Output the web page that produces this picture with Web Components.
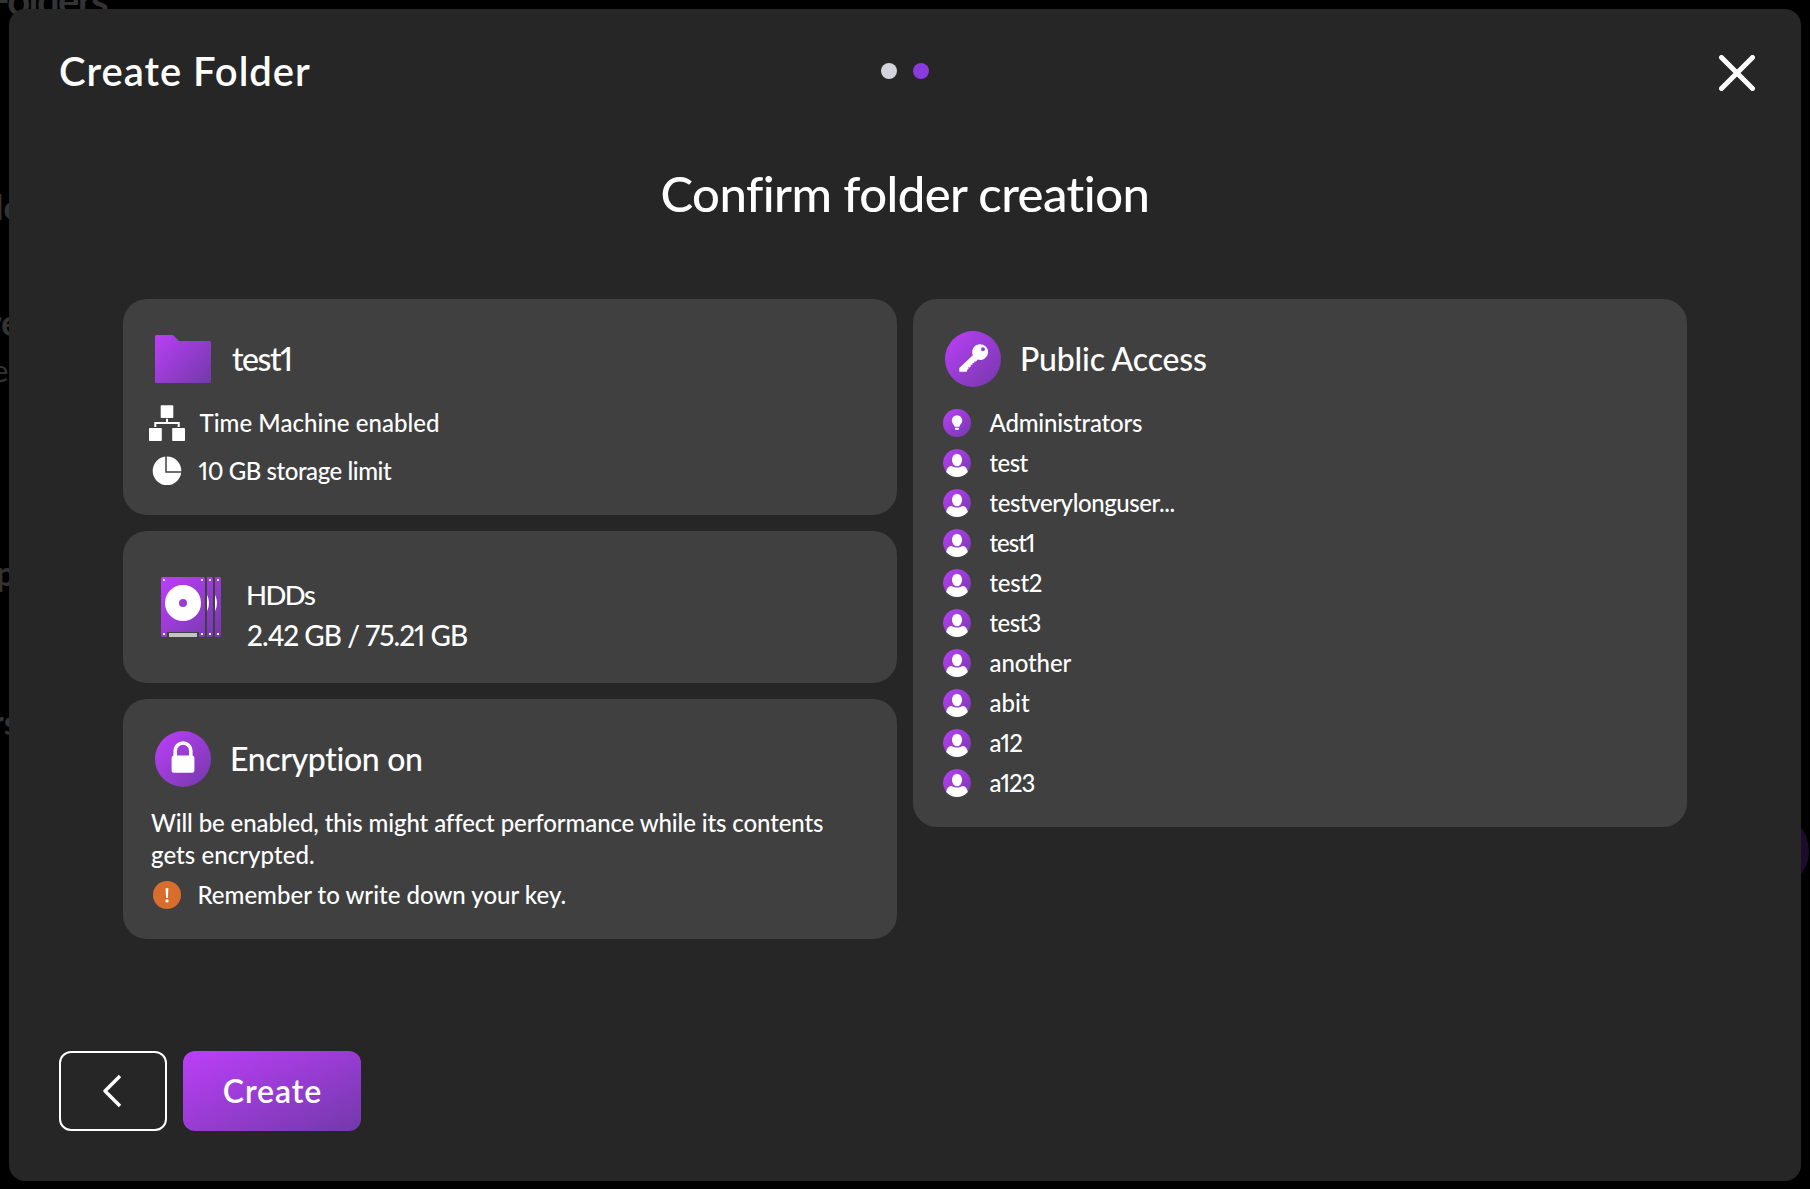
<!DOCTYPE html>
<html lang="en">
<head>
<meta charset="utf-8">
<title>Create Folder</title>
<style>
html, body { margin: 0; height: 100%; background: #000; overflow: hidden; }
body { font-family: Lato, "Open Sans", sans-serif; color: #fff; }
</style>
</head>
<body>
<create-folder-page></create-folder-page>
<script>
const gradient = (id, w, h) => `<defs><linearGradient id="${id}" gradientUnits="userSpaceOnUse" x1="0" y1="0" x2="${w}" y2="${h}"><stop stop-color="#bc3ff9"/><stop offset="1" stop-color="#7339aa"/></linearGradient></defs>`;

const define = (name, html, connected) => {
  const template = document.createElement('template');
  template.innerHTML = html;
  customElements.define(name, class extends HTMLElement {
    constructor() {
      super();
      this.attachShadow({ mode: 'open' }).append(template.content.cloneNode(true));
    }
    connectedCallback() { if (connected) connected.call(this); }
  });
};

/* One line of text, tracked so that its ink spans the given width. */
const measure = document.createElement('canvas').getContext('2d');
customElements.define('text-line', class extends HTMLElement {
  connectedCallback() {
    if (this.shadowRoot) return;
    const size = +this.getAttribute('size') || 24;
    const weight = this.getAttribute('weight') || 500;
    const lh = this.getAttribute('lh') || 32;
    const label = this.getAttribute('label');
    this.attachShadow({ mode: 'open' }).innerHTML = `<style>
      :host { display: block; white-space: nowrap; line-height: ${lh}px; height: ${lh}px; font-size: ${size}px; font-weight: ${weight}; font-variant-numeric: proportional-nums; font-variant-ligatures: none; }
      span { display: block; width: max-content; }
    </style><span></span>`;
    const span = this.shadowRoot.querySelector('span');
    span.textContent = label;
    measure.font = `${weight} ${size}px Lato`;
    measure.letterSpacing = '0.01px';
    const m = measure.measureText(label);
    const drawn = span.getBoundingClientRect().width;
    const ink = m.actualBoundingBoxRight + m.actualBoundingBoxLeft + (drawn ? drawn - m.width : 0);
    const target = +this.getAttribute('ink');
    if (target && label.length > 1) span.style.letterSpacing = ((target - ink) / (label.length - 1)).toFixed(3) + 'px';
    span.style.marginLeft = m.actualBoundingBoxLeft.toFixed(2) + 'px';
    if (target) this.style.width = target + 'px';
  }
});

const ICONS = {
  folder: [56, 56, gradient('g', 56, 52) + `<path fill="url(#g)" d="M1.5 4H18l6 6h30.500a1.500 1.500 0 0 1 1.500 1.500V50.500a1.500 1.500 0 0 1-1.500 1.500H1.500A1.500 1.500 0 0 1 0 50.500V5.500A1.500 1.500 0 0 1 1.500 4z"/>`],
  lock: [56, 56, gradient('g', 56, 56) + `<circle cx="28" cy="28" r="28" fill="url(#g)"/><rect x="16.600" y="24.500" width="22.800" height="17.300" rx="2.500" fill="#fff"/><path d="M20.200 26v-6.200a7.800 7.800 0 0 1 15.600 0V26" fill="none" stroke="#fff" stroke-width="3.600"/>`],
  key: [56, 56, gradient('g', 56, 56) + `<circle cx="28" cy="28" r="28" fill="url(#g)"/><path fill="#fff" fill-rule="evenodd" d="M35.300 13.200a7.900 7.900 0 1 1-2.500 15.400L31 30.500h-1.700v1.600h-1.800v1.600h-1.800v1.800l-1 1-1.400-.4.300 1.600-1.400 1.400-.5 1.600H14.300v-3.700L27.800 24.200A7.900 7.900 0 0 1 35.300 13.200zM38 16.300a2 2 0 1 0 0 4 2 2 0 1 0 0-4z"/>`],
  bulb: [28, 28, gradient('g', 28, 28) + `<circle cx="14" cy="14" r="14" fill="url(#g)"/><path fill="#fff" d="M14 6.300a5.200 5.200 0 0 1 5.200 5.200c0 2.700-2.100 3.700-2.800 6.300h-4.800c-.7-2.600-2.800-3.600-2.800-6.300A5.200 5.200 0 0 1 14 6.300zM12 18.700h4v1.500l-.8.9h-2.400l-.8-.9z"/>`],
  user: [28, 28, gradient('g', 28, 28) + `<clipPath id="c"><circle cx="14" cy="14" r="14"/></clipPath><g clip-path="url(#c)"><circle cx="14" cy="14" r="14" fill="url(#g)"/><ellipse cx="14" cy="11" rx="5" ry="6.300" fill="#fff"/><path fill="#fff" d="M2 27.800l1-4.300c.7-3.700 2.200-5.700 4.700-6.400 1.300-.3 2.300 1.500 6.300 1.500s5-1.800 6.300-1.500c2.500.7 4 2.700 4.700 6.400l1 4.300-6.500.1h-11z"/></g>`],
  alert: [28, 28, `<circle cx="14" cy="14" r="14" fill="#d96d2d"/><path d="M12.600 7.200h2.800l-.5 9.800h-1.800z" fill="#fff"/><circle cx="14" cy="19.900" r="1.650" fill="#fff"/>`],
  network: [36, 36, `<g fill="#fff"><rect x="11.700" y=".3" width="12.600" height="12.600" rx=".7"/><rect x="0" y="23.100" width="12.800" height="12.800" rx=".7"/><rect x="23.200" y="23.100" width="12.800" height="12.800" rx=".7"/></g><path d="M18 13.800v4.300M6.300 22v-4.100h23.400V22" fill="none" stroke="#fff" stroke-width="2"/>`],
  pie: [30, 30, `<circle cx="15" cy="14.800" r="14.300" fill="#fff"/><path d="M14-1V16H30" fill="none" stroke="#404040" stroke-width="1.500"/>`],
  disks: [60, 60, gradient('g', 60, 60) + `<path fill="url(#g)" d="M1 0h42l1 1v58l-1 1h-5v-5H6v5H1l-1-1V1zM46 0h5l1 1v58l-1 1h-5zM54 0h5l1 1v58l-1 1h-5z"/><circle cx="22" cy="26" r="18" fill="#fff"/><circle cx="22" cy="26" r="4" fill="#9a3dd4"/><rect x="8" y="56" width="28" height="4" fill="#c4c4c4"/><g fill="#fff"><path d="M46 18c2.600 4 2.600 12 0 16zM54 18c2.600 4 2.600 12 0 16z"/><path d="M2 2h2v2H2zM40 2h2v2h-2zM48 2h2v2h-2zM56 2h2v2h-2zM2 56h2v2H2zM40 56h2v2h-2zM48 56h2v2h-2zM56 56h2v2h-2z" opacity=".9"/></g>`],
  close: [36, 36, `<path d="M2.500 2.500l31 31M33.500 2.500l-31 31" fill="none" stroke="#fff" stroke-width="5" stroke-linecap="round"/>`],
  back: [20, 34, `<path d="M17 2L2 17l15 15" fill="none" stroke="#fff" stroke-width="3.400" stroke-linejoin="round"/>`]
};
customElements.define('ui-icon', class extends HTMLElement {
  connectedCallback() {
    if (this.shadowRoot) return;
    const [w, h, body] = ICONS[this.getAttribute('name')];
    this.attachShadow({ mode: 'open' }).innerHTML = `<style>:host{display:block;flex:none;width:${w}px;height:${h}px}svg{display:block}</style><svg width="${w}" height="${h}" viewBox="0 0 ${w} ${h}">${body}</svg>`;
  }
});

define('info-card', `<style>
  :host { display: flex; flex-direction: column; background: #404040; border-radius: 24px; padding: 24px 24px 24px 28px; box-sizing: border-box; }
</style><slot></slot>`);

define('card-title', `<style>
  :host { display: flex; align-items: center; height: 72px; gap: 21px; padding-left: 4px; margin-bottom: 8px; }
</style><slot name="icon"></slot><slot></slot>`);

define('list-row', `<style>
  :host { display: flex; align-items: center; height: 40px; gap: 14.5px; }
  :host([tall]) { height: 48px; }
  .icon { width: 36px; display: flex; justify-content: center; margin-left: -2px; }
</style><div class="icon"><slot name="icon"></slot></div><slot></slot>`,
function () {
  if (this.getAttribute('icon')) this.shadowRoot.querySelector('.icon').innerHTML = `<ui-icon name="${this.getAttribute('icon')}"></ui-icon>`;
});

define('step-dots', `<style>
  :host { display: flex; gap: 16px; justify-content: center; }
  i { width: 16px; height: 16px; border-radius: 50%; background: #d1d5db; }
  i + i { background: #8b3add; }
</style><i></i><i></i>`);

define('outline-button', `<style>
  :host { display: block; }
  button { all: unset; display: flex; align-items: center; justify-content: center; box-sizing: border-box; width: 108px; height: 80px; border: 2px solid #fff; border-radius: 12px; }
</style><button aria-label="Back"><slot></slot></button>`);

define('primary-button', `<style>
  :host { display: block; }
  button { all: unset; display: flex; align-items: center; justify-content: center; width: 178px; height: 80px; border-radius: 12px; background: linear-gradient(to bottom right, #bc3ff9, #7339aa); }
</style><button><slot></slot></button>`);

define('page-backdrop', `<style>
  :host { display: block; position: absolute; inset: 0; overflow: hidden; color: #333; }
  text-line { position: absolute; }
  .fab { position: absolute; left: 1729px; top: 811px; width: 80px; height: 80px; border-radius: 50%; background: #1c0b29; }
</style>
<text-line style="left:-9px;top:-24px" size="40" weight="700" lh="48" ink="117" label="Folders"></text-line>
<text-line style="left:-3px;top:191px" size="34" weight="700" label="le"></text-line>
<text-line style="left:-10px;top:306px" size="36" weight="700" label="re"></text-line>
<text-line style="left:-7px;top:354px" size="31" weight="400" label="e"></text-line>
<text-line style="left:-2px;top:557px" size="34" weight="700" label="p"></text-line>
<text-line style="left:-7px;top:706px" size="34" weight="700" label="rs"></text-line>
<div class="fab"></div>`);

define('folder-dialog', `<style>
  :host { display: flex; flex-direction: column; position: relative; box-sizing: border-box; width: 1792px; height: 1172px; background: #262626; border-radius: 16px; padding: 36px 50px 50px 50px; }
  header { display: grid; grid-template-columns: 1fr 48px 1fr; height: 52px; align-items: center; }
  header text-line { margin-left: 1px; }
  header ui-icon { justify-self: end; margin-top: 4px; margin-right: -4px; }
  h1 { margin: 64px 0 2px; display: flex; justify-content: center; font: inherit; height: 64px; }
  main { display: grid; grid-template-columns: 774px 774px; gap: 16px; margin: 72px 0 0 64px; align-items: start; flex: 1; }
  .left { display: flex; flex-direction: column; gap: 16px; }
  .rows { margin-top: -4px; margin-bottom: -4px; }
  .storage { flex-direction: row; align-items: center; height: 152px; padding: 0 0 0 38px; gap: 27px; }
  .storage > div { padding-top: 16px; }
  .note { padding: 4px 0; }
  footer { display: flex; gap: 16px; }
</style>
<header>
  <text-line size="40" weight="600" lh="48" ink="250" label="Create Folder"></text-line>
  <step-dots></step-dots>
  <ui-icon name="close"></ui-icon>
</header>
<h1><text-line size="49" weight="500" lh="64" ink="485" label="Confirm folder creation"></text-line></h1>
<main>
  <div class="left">
    <info-card>
      <card-title><ui-icon slot="icon" name="folder"></ui-icon><text-line size="32" lh="40" ink="59.500" label="test1"></text-line></card-title>
      <div class="rows">
        <list-row tall icon="network"><text-line ink="238.500" label="Time Machine enabled"></text-line></list-row>
        <list-row tall icon="pie"><text-line ink="192.500" label="10 GB storage limit"></text-line></list-row>
      </div>
    </info-card>
    <info-card class="storage">
      <ui-icon name="disks"></ui-icon>
      <div>
        <text-line size="27.500" lh="40" ink="67" label="HDDs"></text-line>
        <text-line size="28" lh="40" ink="219" label="2.42 GB / 75.21 GB"></text-line>
      </div>
    </info-card>
    <info-card>
      <card-title><ui-icon slot="icon" name="lock"></ui-icon><text-line size="32" lh="40" ink="189" label="Encryption on"></text-line></card-title>
      <div class="note">
        <text-line ink="672" label="Will be enabled, this might affect performance while its contents"></text-line>
        <text-line ink="163" label="gets encrypted."></text-line>
      </div>
      <list-row icon="alert"><text-line ink="366" label="Remember to write down your key."></text-line></list-row>
    </info-card>
  </div>
  <info-card>
    <card-title><ui-icon slot="icon" name="key"></ui-icon><text-line size="32" lh="40" ink="184" label="Public Access"></text-line></card-title>
    <list-row icon="bulb"><text-line ink="152.500" label="Administrators"></text-line></list-row>
    <list-row icon="user"><text-line ink="39" label="test"></text-line></list-row>
    <list-row icon="user"><text-line ink="185" label="testverylonguser..."></text-line></list-row>
    <list-row icon="user"><text-line ink="45" label="test1"></text-line></list-row>
    <list-row icon="user"><text-line ink="52" label="test2"></text-line></list-row>
    <list-row icon="user"><text-line ink="51" label="test3"></text-line></list-row>
    <list-row icon="user"><text-line ink="82" label="another"></text-line></list-row>
    <list-row icon="user"><text-line ink="40.500" label="abit"></text-line></list-row>
    <list-row icon="user"><text-line ink="32.500" label="a12"></text-line></list-row>
    <list-row icon="user"><text-line ink="45" label="a123"></text-line></list-row>
  </info-card>
</main>
<footer>
  <outline-button><ui-icon name="back"></ui-icon></outline-button>
  <primary-button><text-line size="32" weight="600" lh="40" ink="96.500" label="Create"></text-line></primary-button>
</footer>`);

define('create-folder-page', `<style>
  :host { display: block; position: relative; width: 1810px; height: 1189px; box-sizing: border-box; padding: 9px; overflow: hidden; }
</style><page-backdrop></page-backdrop><folder-dialog></folder-dialog>`);
</script>
</body>
</html>
